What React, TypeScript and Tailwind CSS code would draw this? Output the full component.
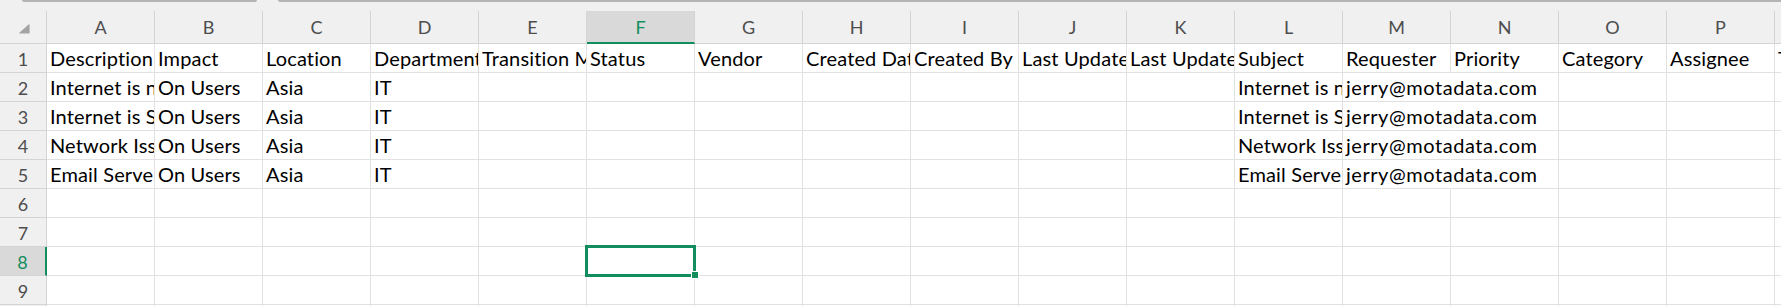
import React from 'react';

const COLS = 'ABCDEFGHIJKLMNOPQ'.split('');

const HEAD = [
  'Description', 'Impact', 'Location', 'Department', 'Transition Model', 'Status', 'Vendor',
  'Created Date', 'Created By', 'Last Updated By', 'Last Updated Date', 'Subject', 'Requester',
  'Priority', 'Category', 'Assignee', 'Technician Group',
];

const SUBJECTS = ['Internet is not working', 'Internet is Slow', 'Network Issue', 'Email Server Down'];

// row data, 17 columns (A..Q); empty string = blank cell
const rowValues = (r: number): string[] => {
  if (r === 1) return HEAD;
  if (r >= 2 && r <= 5) {
    const s = SUBJECTS[r - 2];
    const v = Array(17).fill('');
    v[0] = s;
    v[1] = 'On Users';
    v[2] = 'Asia';
    v[3] = 'IT';
    v[11] = s;
    v[12] = 'jerry@motadata.com';
    return v;
  }
  return Array(17).fill('');
};

const SEL_COL = 5; // F
const SEL_ROW = 8;

export default function App() {
  const rows = [1, 2, 3, 4, 5, 6, 7, 8, 9, 10];

  return (
    <div className="w-[1781px] h-[306px] overflow-hidden bg-white font-[Lato,sans-serif]">
      {/* bottom edge of name box / formula bar */}
      <div className="h-[11px] bg-[#f0f0f0] flex">
        <div className="ml-[22px] w-[235px] h-[2px] bg-[#b4b4b4] rounded-b-[2px]" />
        <div className="ml-[21px] flex-1 h-[2px] bg-[#b4b4b4] rounded-bl-[2px]" />
      </div>

      <div className="grid w-max grid-cols-[47px_repeat(17,108px)]">
        {/* select all corner */}
        <div className="h-[33px] bg-[#f0f0f0] border-r border-b border-[#d4d4d4] pl-[19px] pt-[13px]">
          <svg width="11" height="10" viewBox="0 0 11 10" className="block">
            <path d="M10 1 L10 9 L1 9 Z" fill="#a3a3a3" stroke="#a3a3a3" strokeWidth="1.2" strokeLinejoin="round" />
          </svg>
        </div>

        {COLS.map((c, i) =>
          i === SEL_COL ? (
            <div
              key={c}
              className="h-[33px] bg-[#d9d9d9] border-r border-r-[#d4d4d4] border-b-2 border-b-[#128d5e] flex items-center justify-center text-[18px] leading-[24px] text-[#128d5e]"
            >
              {c}
            </div>
          ) : (
            <div
              key={c}
              className="h-[33px] bg-[#f0f0f0] border-r border-b border-[#d4d4d4] flex items-center justify-center text-[18px] leading-[24px] text-[#4d4d4d]"
            >
              {c}
            </div>
          )
        )}

        {rows.map(r => (
          <React.Fragment key={r}>
            {r === SEL_ROW ? (
              <div className="h-[29px] bg-[#d9d9d9] border-r-2 border-r-[#128d5e] border-b border-b-[#d4d4d4] flex items-end justify-center pb-[1px] text-[18px] leading-[24px] text-[#128d5e]">
                {r}
              </div>
            ) : (
              <div className="h-[29px] bg-[#f0f0f0] border-r border-b border-[#d4d4d4] flex items-end justify-center pb-[1px] text-[18px] leading-[24px] text-[#4d4d4d]">
                {r}
              </div>
            )}

            {rowValues(r).map((v, i) => {
              if (r === SEL_ROW && i === SEL_COL) {
                return (
                  <div key={i} className="relative h-[29px] border-r border-b border-[#e1e1e1]">
                    <div className="absolute z-10 left-[-2px] top-[-2px] w-[111px] h-[32px] border-[3px] border-[#128d5e]" />
                    <div className="absolute z-20 left-[104px] top-[24px] w-[8px] h-[8px] bg-[#128d5e] border border-white" />
                  </div>
                );
              }
              // the requester email spills into the empty Priority cell
              if (i === 12 && r >= 2 && r <= 5) {
                return (
                  <div
                    key={i}
                    className="h-[29px] border-r border-r-transparent border-b border-b-[#e1e1e1] overflow-visible whitespace-nowrap flex items-end pl-[3px] pb-[2px] text-[20px] tracking-[0.55px] leading-[24px] text-black"
                  >
                    {v}
                  </div>
                );
              }
              return (
                <div
                  key={i}
                  className="h-[29px] border-r border-b border-[#e1e1e1] overflow-hidden whitespace-nowrap flex items-end pl-[3px] pb-[2px] text-[20px] tracking-[0.15px] leading-[24px] text-black"
                >
                  {v}
                </div>
              );
            })}
          </React.Fragment>
        ))}
      </div>
    </div>
  );
}
